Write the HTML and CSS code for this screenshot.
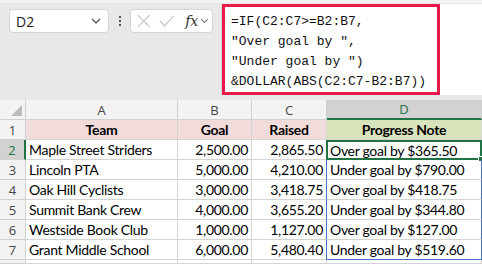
FILE: index.html
```html
<!DOCTYPE html>
<html>
<head>
    <meta charset="UTF-8">
    <link rel="stylesheet" href="styles.css">
</head>
<body>
    <div class="toolbar">
        <div class="name-box">
            <span class="cell-ref">D2</span>
            <svg class="chevron" width="10" height="6" viewBox="0 0 10 6"><polyline points="1,1 5,5 9,1" fill="none" stroke="#444" stroke-width="1.2"/></svg>
        </div>
        <div class="dots"><span></span><span></span><span></span></div>
        <div class="fx-box">
            <svg width="14" height="14" viewBox="0 0 14 14"><path d="M1 1 L13 13 M13 1 L1 13" stroke="#c4c4c4" stroke-width="1.2"/></svg>
            <svg width="16" height="14" viewBox="0 0 16 14"><polyline points="1,7 5.5,12 15,2" fill="none" stroke="#c4c4c4" stroke-width="1.2"/></svg>
            <span class="fx">fx</span>
            <svg width="9" height="6" viewBox="0 0 9 6"><polyline points="1,1 4.5,4.5 8,1" fill="none" stroke="#777" stroke-width="1.1"/></svg>
        </div>
        <div class="formula-bar">
            <pre class="formula">=IF(C2:C7&gt;=B2:B7,
"Over goal by ",
"Under goal by ")
&amp;DOLLAR(ABS(C2:C7-B2:B7))</pre>
        </div>
    </div>

    <div class="sheet">
        <div class="hdr corner"><span class="tri"></span></div>
        <div class="hdr col">A</div>
        <div class="hdr col">B</div>
        <div class="hdr col">C</div>
        <div class="hdr col active">D</div>
        <div class="hdr col"></div>

        <div class="hdr row">1</div>
        <div class="cell title">Team</div>
        <div class="cell title">Goal</div>
        <div class="cell title">Raised</div>
        <div class="cell title note">Progress Note</div>
        <div class="cell"></div>

        <div class="hdr row active">2</div>
        <div class="cell">Maple Street Striders</div>
        <div class="cell num">2,500.00</div>
        <div class="cell num">2,865.50</div>
        <div class="cell spill selected">Over goal by $365.50<span class="handle"></span></div>
        <div class="cell"></div>

        <div class="hdr row">3</div>
        <div class="cell">Lincoln PTA</div>
        <div class="cell num">5,000.00</div>
        <div class="cell num">4,210.00</div>
        <div class="cell spill">Under goal by $790.00</div>
        <div class="cell"></div>

        <div class="hdr row">4</div>
        <div class="cell">Oak Hill Cyclists</div>
        <div class="cell num">3,000.00</div>
        <div class="cell num">3,418.75</div>
        <div class="cell spill">Over goal by $418.75</div>
        <div class="cell"></div>

        <div class="hdr row">5</div>
        <div class="cell">Summit Bank Crew</div>
        <div class="cell num">4,000.00</div>
        <div class="cell num">3,655.20</div>
        <div class="cell spill">Under goal by $344.80</div>
        <div class="cell"></div>

        <div class="hdr row">6</div>
        <div class="cell">Westside Book Club</div>
        <div class="cell num">1,000.00</div>
        <div class="cell num">1,127.00</div>
        <div class="cell spill">Over goal by $127.00</div>
        <div class="cell"></div>

        <div class="hdr row">7</div>
        <div class="cell">Grant Middle School</div>
        <div class="cell num">6,000.00</div>
        <div class="cell num">5,480.40</div>
        <div class="cell spill last">Under goal by $519.60</div>
        <div class="cell"></div>

        <div class="hdr row"></div>
        <div class="cell"></div>
        <div class="cell"></div>
        <div class="cell"></div>
        <div class="cell"></div>
        <div class="cell"></div>
    </div>
</body>
</html>
```

FILE: styles.css
```css
* {
    margin: 0;
    padding: 0;
    box-sizing: border-box;
}

body {
    width: 482px;
    height: 264px;
    overflow: hidden;
    background: #e8e8e8;
    font-family: "Open Sans", "Noto Sans", sans-serif;
}

.toolbar {
    height: 100px;
    display: flex;
    align-items: flex-start;
    border-top: 3px solid #f2f2f2;
}

.name-box {
    margin: 6px 0 0 9px;
    width: 100px;
    height: 24px;
    background: #fff;
    border: 1px solid #d6d6d6;
    border-radius: 4px;
    display: flex;
    align-items: center;
    justify-content: space-between;
    padding: 0 7px 0 6px;
}

.cell-ref {
    font-size: 14px;
    color: #222;
}

.dots {
    margin: 13px 0 0 10px;
    display: flex;
    flex-direction: column;
    gap: 2px;
}

.dots span {
    width: 2px;
    height: 2px;
    background: #555;
}

.fx-box {
    margin: 6px 0 0 9px;
    width: 83px;
    height: 24px;
    background: #fff;
    border: 1px solid #d6d6d6;
    border-radius: 4px;
    display: flex;
    align-items: center;
    padding: 0 3px 0 6px;
    gap: 8px;
}

.fx {
    font-family: "DejaVu Serif", serif;
    font-style: italic;
    font-size: 14px;
    color: #333;
    margin-left: 3px;
    margin-right: -6px;
}

.formula-bar {
    margin: 1px 0 0 8px;
    flex: 1;
    height: 91px;
    background: #fff;
    border-left: 1px solid #d6d6d6;
}

.formula {
    width: 218px;
    height: 91px;
    border: 3px solid #e8194b;
    padding: 5px 0 0 6px;
    font-family: "Liberation Mono", monospace;
    font-size: 13px;
    line-height: 20px;
    color: #111;
}

.sheet {
    display: grid;
    grid-template-columns: 26px 152px 74px 75px 155px 1fr;
    grid-template-rows: repeat(8, 20px) 4px;
    overflow: hidden;
    background: #fff;
    font-family: "Lato", "Open Sans", sans-serif;
    font-size: 14px;
    letter-spacing: -0.3px;
    color: #000;
}

.hdr {
    background: #f3f3f3;
    color: #444;
    border-right: 1px solid #d0d0d0;
    border-bottom: 1px solid #d0d0d0;
    display: flex;
    align-items: center;
    justify-content: center;
    font-family: "Open Sans", sans-serif;
    font-size: 13px;
    letter-spacing: 0;
}

.corner {
    position: relative;
}

.tri {
    position: absolute;
    right: 3px;
    bottom: 3px;
    width: 0;
    height: 0;
    border-left: 11px solid transparent;
    border-bottom: 11px solid #bcbcbc;
}

.hdr.col.active {
    background: #d2d2d2;
    color: #217346;
    border-bottom: 2px solid #217346;
}

.hdr.row.active {
    background: #d2d2d2;
    color: #217346;
    border-right: 2px solid #217346;
}

.cell {
    border-right: 1px solid #d4d4d4;
    border-bottom: 1px solid #d4d4d4;
    padding: 0 3px;
    display: flex;
    align-items: center;
    white-space: nowrap;
    overflow: hidden;
}

.cell.title {
    background: #f2dcdb;
    font-weight: bold;
    justify-content: center;
}

.cell.title.note {
    background: #d8e4bc;
}

.cell.num {
    justify-content: flex-end;
}

.cell.spill {
    border-left: 1px solid #4472c4;
    border-right: 1px solid #4472c4;
    margin-left: -1px;
    overflow: visible;
    position: relative;
}

.cell.spill.last {
    border-bottom: 1px solid #4472c4;
}

.cell.selected {
    border: 2px solid #217346;
    padding-left: 2px;
}

.handle {
    position: absolute;
    right: -4px;
    bottom: -4px;
    width: 6px;
    height: 6px;
    background: #217346;
    border: 1px solid #fff;
}
```
